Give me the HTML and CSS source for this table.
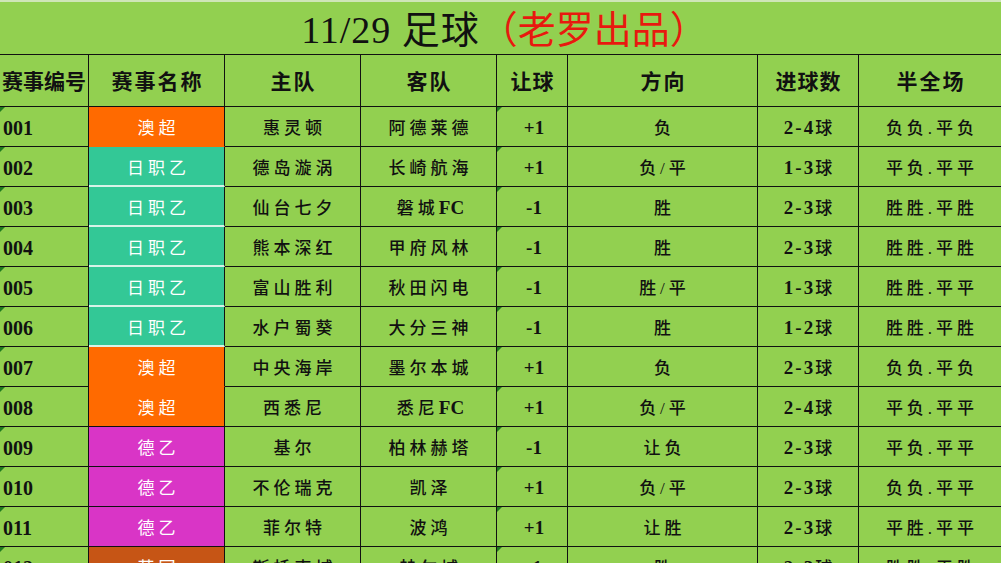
FILE: index.html
```html
<!DOCTYPE html>
<html lang="zh">
<head>
<meta charset="utf-8">
<title>11/29 足球</title>
<link rel="stylesheet" href="styles.css">
</head>
<body>
<div class="sheet">
  <div class="title">11/29 足球<span class="red">（老罗出品）</span></div>
  <div class="row head">
    <div class="c c1 hn">赛事编号</div>
    <div class="c">赛事名称</div>
    <div class="c">主队</div>
    <div class="c">客队</div>
    <div class="c hs">让球</div>
    <div class="c">方向</div>
    <div class="c hs">进球数</div>
    <div class="c">半全场</div>
  </div>

  <div class="row">
    <div class="c c1 tri"><b>001</b></div>
    <div class="c lg orange">澳超</div>
    <div class="c">惠灵顿</div>
    <div class="c">阿德莱德</div>
    <div class="c tri"><b>+1</b></div>
    <div class="c">负</div>
    <div class="c"><b class="g">2-4</b>球</div>
    <div class="c">负负.平负</div>
  </div>
  <div class="row">
    <div class="c c1 tri"><b>002</b></div>
    <div class="c lg teal">日职乙</div>
    <div class="c">德岛漩涡</div>
    <div class="c">长崎航海</div>
    <div class="c tri"><b>+1</b></div>
    <div class="c">负/平</div>
    <div class="c"><b class="g">1-3</b>球</div>
    <div class="c">平负.平平</div>
  </div>
  <div class="row">
    <div class="c c1 tri"><b>003</b></div>
    <div class="c lg teal">日职乙</div>
    <div class="c">仙台七夕</div>
    <div class="c">磐城<b>FC</b></div>
    <div class="c tri"><b>-1</b></div>
    <div class="c">胜</div>
    <div class="c"><b class="g">2-3</b>球</div>
    <div class="c">胜胜.平胜</div>
  </div>
  <div class="row">
    <div class="c c1 tri"><b>004</b></div>
    <div class="c lg teal">日职乙</div>
    <div class="c">熊本深红</div>
    <div class="c">甲府风林</div>
    <div class="c tri"><b>-1</b></div>
    <div class="c">胜</div>
    <div class="c"><b class="g">2-3</b>球</div>
    <div class="c">胜胜.平胜</div>
  </div>
  <div class="row">
    <div class="c c1 tri"><b>005</b></div>
    <div class="c lg teal">日职乙</div>
    <div class="c">富山胜利</div>
    <div class="c">秋田闪电</div>
    <div class="c tri"><b>-1</b></div>
    <div class="c">胜/平</div>
    <div class="c"><b class="g">1-3</b>球</div>
    <div class="c">胜胜.平平</div>
  </div>
  <div class="row">
    <div class="c c1 tri"><b>006</b></div>
    <div class="c lg teal">日职乙</div>
    <div class="c">水户蜀葵</div>
    <div class="c">大分三神</div>
    <div class="c tri"><b>-1</b></div>
    <div class="c">胜</div>
    <div class="c"><b class="g">1-2</b>球</div>
    <div class="c">胜胜.平胜</div>
  </div>
  <div class="row">
    <div class="c c1 tri"><b>007</b></div>
    <div class="c lg orange">澳超</div>
    <div class="c">中央海岸</div>
    <div class="c">墨尔本城</div>
    <div class="c tri"><b>+1</b></div>
    <div class="c">负</div>
    <div class="c"><b class="g">2-3</b>球</div>
    <div class="c">负负.平负</div>
  </div>
  <div class="row">
    <div class="c c1 tri"><b>008</b></div>
    <div class="c lg orange last">澳超</div>
    <div class="c">西悉尼</div>
    <div class="c">悉尼<b>FC</b></div>
    <div class="c tri"><b>+1</b></div>
    <div class="c">负/平</div>
    <div class="c"><b class="g">2-4</b>球</div>
    <div class="c">平负.平平</div>
  </div>
  <div class="row">
    <div class="c c1 tri"><b>009</b></div>
    <div class="c lg magenta">德乙</div>
    <div class="c">基尔</div>
    <div class="c">柏林赫塔</div>
    <div class="c tri"><b>-1</b></div>
    <div class="c">让负</div>
    <div class="c"><b class="g">2-3</b>球</div>
    <div class="c">平负.平平</div>
  </div>
  <div class="row">
    <div class="c c1 tri"><b>010</b></div>
    <div class="c lg magenta">德乙</div>
    <div class="c">不伦瑞克</div>
    <div class="c">凯泽</div>
    <div class="c tri"><b>+1</b></div>
    <div class="c">负/平</div>
    <div class="c"><b class="g">2-3</b>球</div>
    <div class="c">负负.平平</div>
  </div>
  <div class="row">
    <div class="c c1 tri"><b>011</b></div>
    <div class="c lg magenta">德乙</div>
    <div class="c">菲尔特</div>
    <div class="c">波鸿</div>
    <div class="c tri"><b>+1</b></div>
    <div class="c">让胜</div>
    <div class="c"><b class="g">2-3</b>球</div>
    <div class="c">平胜.平平</div>
  </div>
  <div class="row">
    <div class="c c1 tri"><b>012</b></div>
    <div class="c lg rust">英冠</div>
    <div class="c">斯托克城</div>
    <div class="c">赫尔城</div>
    <div class="c tri"><b>-1</b></div>
    <div class="c">胜</div>
    <div class="c"><b class="g">2-3</b>球</div>
    <div class="c">胜胜.平胜</div>
  </div>
</div>
</body>
</html>
```

FILE: styles.css
```css
html, body {
  margin: 0;
  padding: 0;
  background: #92d050;
  overflow: hidden;
}

.sheet {
  width: 1001px;
  background: #92d050;
  font-family: "Liberation Serif", "Noto Sans CJK SC", serif;
  color: #111;
}

.title {
  box-sizing: border-box;
  height: 55px;
  border-top: 2px solid #cfe6b8;
  border-bottom: 1px solid #111;
  display: flex;
  align-items: center;
  justify-content: center;
  font-size: 38px;
  letter-spacing: 1px;
  padding-left: 8px;
  padding-bottom: 3px;
}

.title .red {
  color: #e8190f;
  letter-spacing: 0;
}

.row {
  display: grid;
  grid-template-columns: 89px 136px 136px 136px 71px 190px 101px 142px;
  height: 40px;
}

.row.head {
  height: 52px;
}

.c {
  box-sizing: border-box;
  position: relative;
  border-right: 1px solid #111;
  border-bottom: 1px solid #111;
  display: flex;
  align-items: center;
  justify-content: center;
  font-size: 17px;
  letter-spacing: 4px;
  padding-left: 4px;
  padding-top: 4px;
  white-space: nowrap;
  font-weight: 500;
  line-height: 1;
}

.c:last-child {
  border-right: none;
}

.c b {
  font-weight: bold;
  letter-spacing: 0;
  font-size: 19px;
  padding-bottom: 2px;
}

.c b.g {
  letter-spacing: 2px;
}

.head .c {
  font-size: 21px;
  font-weight: bold;
  letter-spacing: 2px;
  padding-left: 2px;
  padding-top: 3px;
}

.head .c.hn {
  letter-spacing: 0;
  padding-left: 2px;
  justify-content: flex-start;
}

.head .c.hs {
  letter-spacing: 1px;
  padding-left: 1px;
}

.c1 {
  justify-content: flex-start;
  padding-left: 3px;
}

.c1 b {
  font-size: 20px;
}

.lg {
  color: #fff;
  font-weight: 400;
  font-size: 17px;
}

.orange {
  background: #ff6a00;
  border-bottom-color: #ff6a00;
}

.orange.last {
  border-bottom-color: #111;
}

.teal {
  background: #33c896;
  border-bottom: 2px solid #d8f3e8;
}

.magenta {
  background: #d935c6;
}

.rust {
  background: #c65515;
}

.tri::before {
  content: "";
  position: absolute;
  left: 0;
  top: 0;
  width: 0;
  height: 0;
  border-top: 5px solid #1f7a1f;
  border-right: 5px solid transparent;
}
```
